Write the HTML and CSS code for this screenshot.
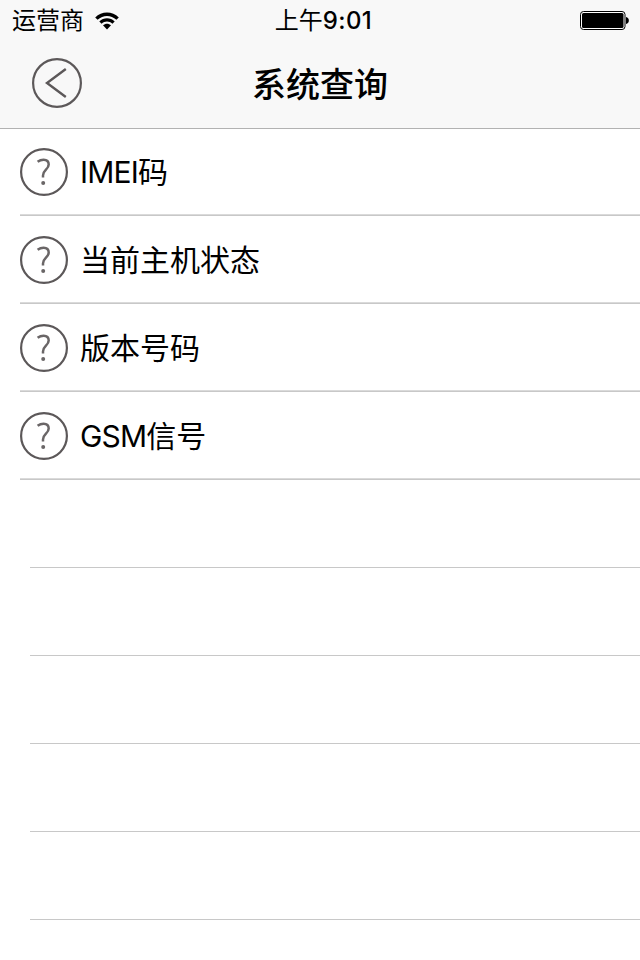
FILE: index.html
```html
<!DOCTYPE html>
<html lang="zh-CN">
<head>
<meta charset="utf-8">
<title>系统查询</title>
<link rel="stylesheet" href="styles.css">
</head>

<body>
<svg class="defs" width="0" height="0">
    <symbol id="icon-question" viewBox="0 0 48 48">
        <circle cx="24" cy="24" r="22.9" fill="#fff" stroke="#5c5859" stroke-width="2.2" />
        <path d="M17.6 13.8C19.6 12.3 21.6 11.7 23.6 11.7C26.8 11.7 28.7 13.5 28.7 16.5C28.7 21.5 23 22 23 27.5V29.5" fill="none" stroke="#6a6667" stroke-width="2.5" />
        <circle cx="23.2" cy="35" r="2" fill="#6a6667" />
    </symbol>
</svg>

<div class="header">
    <div class="statusbar">
        <div class="carrier">
            <span>运营商</span>
            <svg class="wifi" width="24" height="18" viewBox="0 0 24 18">
                <path d="M0.2 5.4C6.5 -1.2 17.5 -1.2 23.8 5.4L21.4 7.8C16 2.6 8 2.6 2.6 7.8Z" />
                <path d="M4.3 9.4C8.7 5.1 15.3 5.1 19.7 9.4L17.4 11.7C14.4 8.8 9.6 8.8 6.6 11.7Z" />
                <path d="M8 13.2C10.3 11.1 13.7 11.1 16 13.2L12 17.4Z" />
            </svg>
        </div>
        <div class="time">上午<span class="digits">9:01</span></div>
        <div class="battery">
            <svg width="50" height="20" viewBox="0 0 50 20">
                <rect x="0.5" y="0.5" width="44.5" height="18" rx="3" fill="#fff" stroke="#000" />
                <rect x="2" y="2" width="41.5" height="15" rx="1.5" />
                <path d="M46 6C49.8 6.8 49.8 12.2 46 13Z" />
            </svg>
        </div>
    </div>
    <div class="navbar">
        <a class="back" href="#">
            <svg width="50" height="50" viewBox="0 0 50 50">
                <circle cx="25" cy="25" r="23.9" fill="none" stroke="#5c5859" stroke-width="2.2" />
                <path d="M33.8 11L15 25L33.8 39" fill="none" stroke="#5c5859" stroke-width="2.4" />
            </svg>
        </a>
        <h1>系统查询</h1>
    </div>
</div>

<ul class="list">
    <li class="item"><svg class="icon"><use href="#icon-question" /></svg><span class="label"><span class="latin">IMEI</span>码</span></li>
    <li class="item"><svg class="icon"><use href="#icon-question" /></svg><span class="label">当前主机状态</span></li>
    <li class="item"><svg class="icon"><use href="#icon-question" /></svg><span class="label">版本号码</span></li>
    <li class="item"><svg class="icon"><use href="#icon-question" /></svg><span class="label"><span class="latin">GSM</span>信号</span></li>
    <li class="empty"></li>
    <li class="empty"></li>
    <li class="empty"></li>
    <li class="empty"></li>
    <li class="empty"></li>
</ul>
</body>
</html>
```
FILE: styles.css
```css
* {
    box-sizing: border-box;
}

body {
    margin: 0;
    height: 960px;
    overflow: hidden;
    background-color: #fff;
    color: #000;
    font-family: Inter, "Noto Sans CJK SC", sans-serif;
}

.defs {
    display: block;
}

.header {
    height: 128px;
    background-color: #f8f8f8;
    box-shadow: 0 1px 0 #b2b2b2;
}

.statusbar {
    display: grid;
    grid-template-columns: 1fr auto 1fr;
    align-items: center;
    height: 40px;
    padding: 2px 10px 0 12px;
    font-size: 24px;
    line-height: 38px;
}

.carrier {
    display: flex;
    align-items: center;
    gap: 11px;
    font-weight: 400;
}

.wifi {
    margin-bottom: 1px;
}

.time {
    padding-left: 5px;
    font-weight: 400;
}

.digits {
    font-weight: 500;
    letter-spacing: 0.4px;
}

.battery {
    display: flex;
    justify-content: flex-end;
}

.navbar {
    display: grid;
    grid-template-columns: 1fr auto 1fr;
    align-items: center;
    height: 86px;
    padding: 0 32px;
}

.back svg {
    display: block;
}

h1 {
    margin: 0;
    padding-top: 4px;
    font-size: 34px;
    font-weight: 500;
    line-height: 50px;
}

.list {
    margin: 0;
    padding: 0;
    list-style: none;
}

.item {
    display: flex;
    align-items: center;
    height: 88px;
    margin-left: 20px;
    border-bottom: 1px solid #c8c8c8;
    box-shadow: inset 0 -1px 0 #dadada;
}

.icon {
    width: 48px;
    height: 48px;
    margin-right: 12px;
}

.label {
    font-size: 30px;
    font-weight: 400;
    line-height: 44px;
}

.latin {
    letter-spacing: -0.8px;
}

.empty {
    height: 88px;
    margin-left: 30px;
    border-bottom: 1px solid #c8c8c8;
}
```
